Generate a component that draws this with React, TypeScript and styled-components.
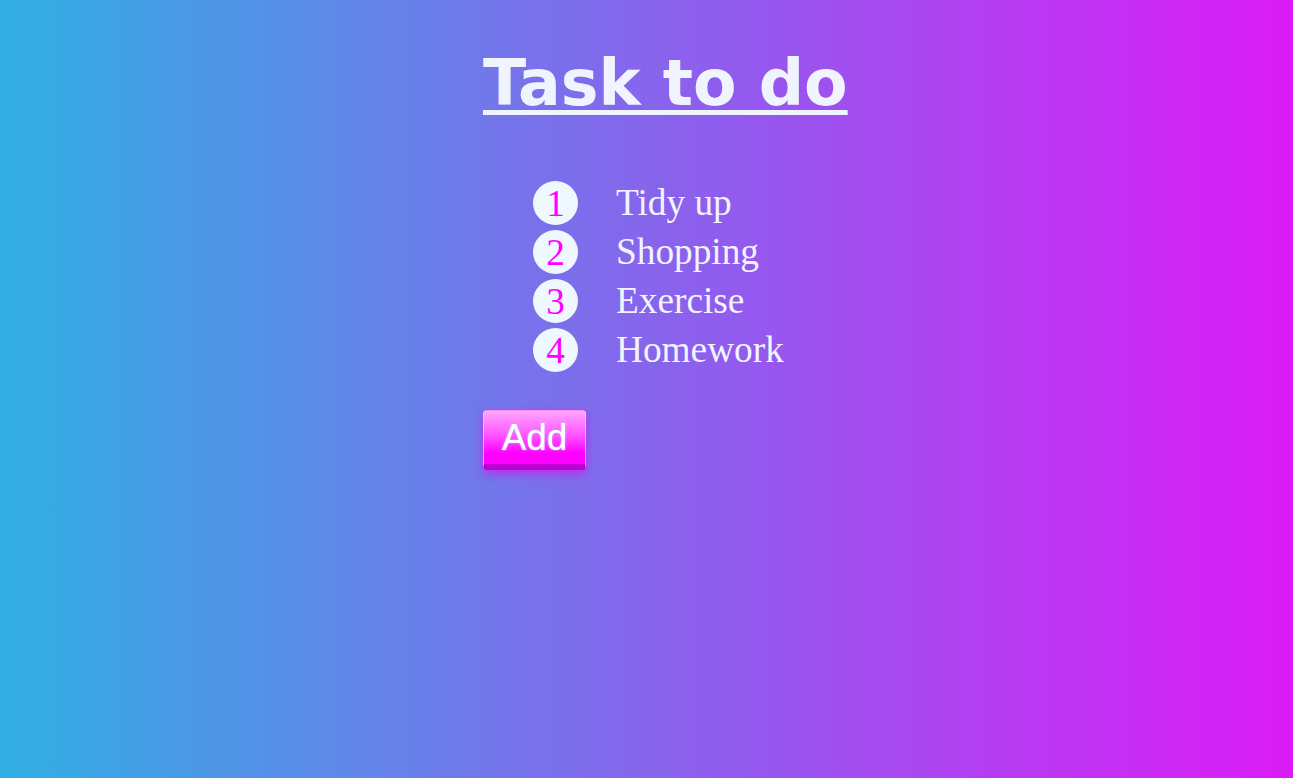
import React, { useState } from "react";
import styled, { createGlobalStyle } from "styled-components";

const GlobalStyle = createGlobalStyle`
  html, body {
    margin: 0;
    padding: 0;
    height: 100%;
  }
  body {
    background: linear-gradient(to right, #31afe3, #dc1bf6);
    font-family: "Liberation Serif", "Times New Roman", serif;
  }
`;

const Page = styled.div`
  min-height: 778px;
  padding: 0 0 0 483px;
  box-sizing: border-box;
`;

const Title = styled.h1`
  margin: 0;
  padding-top: 49px;
  font-family: "DejaVu Sans", Verdana, sans-serif;
  font-size: 63.4px;
  font-weight: bold;
  color: #f0f4ff;
  text-decoration: underline;
  text-decoration-thickness: 5px;
  text-underline-offset: 5px;
  line-height: 1.1;
`;

const TaskList = styled.ol`
  list-style: none;
  margin: 62px 0 0 50px;
  padding: 0;
  display: flex;
  flex-direction: column;
  gap: 5px;
`;

const TaskRow = styled.li`
  display: flex;
  align-items: center;
  gap: 38px;
  height: 44px;
`;

const Badge = styled.span`
  width: 45px;
  height: 44px;
  border-radius: 50%;
  background: #f0f8ff;
  color: #ff00ff;
  font-family: "Liberation Serif", "Times New Roman", serif;
  font-size: 37.3px;
  display: flex;
  align-items: center;
  justify-content: center;
  line-height: 1;
  padding-top: 1px;
  box-sizing: border-box;
`;

const TaskName = styled.span`
  color: #f0f4ff;
  font-family: "Liberation Serif", "Times New Roman", serif;
  font-size: 37.3px;
  line-height: 1;
`;

const AddButton = styled.button`
  margin-top: 38px;
  width: 103px;
  height: 60px;
  padding: 2px 0 0;
  border: 1px solid rgba(255, 200, 255, 0.7);
  border-bottom: 6px solid #c000d2;
  border-radius: 4px;
  background: linear-gradient(to bottom, #ffa6ff 0%, #ff55ff 45%, #ff00ff 80%);
  box-shadow: 0 4px 10px rgba(230, 0, 240, 0.6);
  color: #ffffff;
  font-family: "Liberation Sans", Arial, sans-serif;
  font-size: 36.8px;
  line-height: 1;
  text-shadow: 0 0 2px #9fe6ff;
  cursor: pointer;
  box-sizing: border-box;
`;

const initialTasks = ["Tidy up", "Shopping", "Exercise", "Homework"];

const App = () => {
  const [tasks, setTasks] = useState<string[]>(initialTasks);

  const handleAdd = () => {
    setTasks([...tasks, "New task"]);
  };

  return (
    <Page>
      <GlobalStyle />
      <Title>Task to do</Title>
      <TaskList>
        {tasks.map((task, i) => (
          <TaskRow key={i}>
            <Badge>{i + 1}</Badge>
            <TaskName>{task}</TaskName>
          </TaskRow>
        ))}
      </TaskList>
      <AddButton onClick={handleAdd}>Add</AddButton>
    </Page>
  );
};

export default App;
